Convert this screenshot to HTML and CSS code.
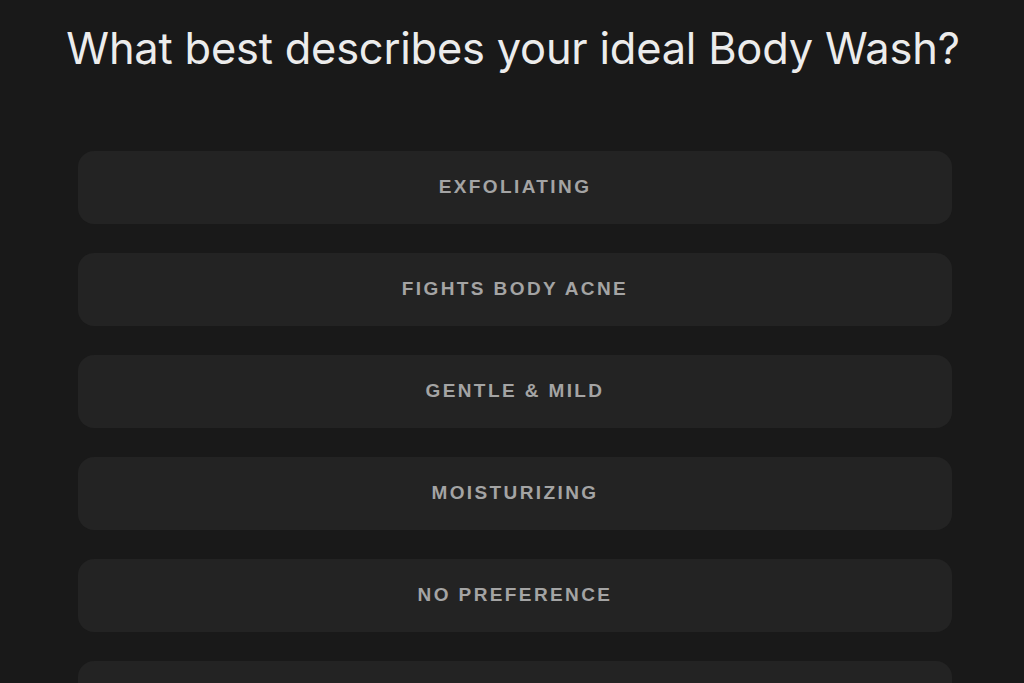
FILE: index.html
```html
<!DOCTYPE html>
<html>
<head>
<meta charset="utf-8">
<link rel="stylesheet" href="styles.css">
</head>
<body>
<main class="quiz">
  <h1 class="question">What best describes your ideal Body Wash?</h1>
  <div class="options">
    <button class="option">EXFOLIATING</button>
    <button class="option">FIGHTS BODY ACNE</button>
    <button class="option">GENTLE &amp; MILD</button>
    <button class="option">MOISTURIZING</button>
    <button class="option">NO PREFERENCE</button>
    <button class="option option-partial"></button>
  </div>
</main>
</body>
</html>
```
FILE: styles.css
```css
html, body {
  margin: 0;
  padding: 0;
  background: #191919;
  height: 100%;
  overflow: hidden;
}
.quiz {
  font-family: Inter, "Liberation Sans", sans-serif;
}
.question {
  margin: 0;
  padding: 21px 0 0 2px;
  text-align: center;
  color: #ececec;
  font-weight: 400;
  font-size: 43.4px;
  line-height: 54px;
  letter-spacing: -0.2px;
  white-space: nowrap;
}
.options {
  margin-top: 76px;
  padding: 0 72px 0 78px;
  display: flex;
  flex-direction: column;
  gap: 29px;
}
.option {
  height: 73px;
  border: none;
  border-radius: 16px;
  background: #232323;
  color: #a4a4a4;
  font-family: "Liberation Sans", Arial, sans-serif;
  font-weight: 700;
  font-size: 19px;
  letter-spacing: 2.4px;
  text-align: center;
  padding: 0 0 2px 0;
}
```
